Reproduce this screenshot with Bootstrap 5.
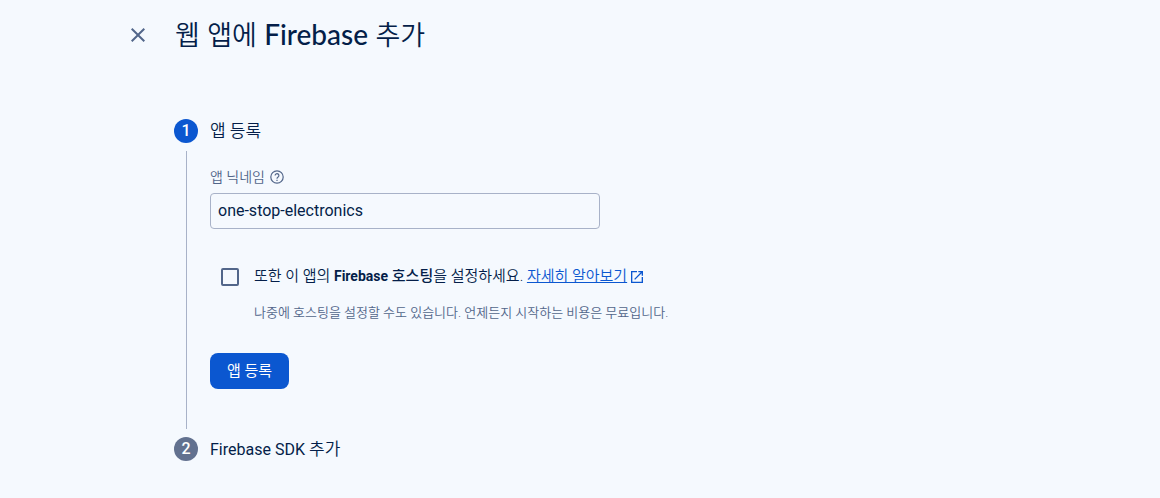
<!DOCTYPE html>
<html lang="ko">
<head>
<meta charset="utf-8">
<meta name="viewport" content="width=device-width, initial-scale=1">
<title>웹 앱에 Firebase 추가</title>
<link href="https://cdn.jsdelivr.net/npm/bootstrap@5.3.0/dist/css/bootstrap.min.css" rel="stylesheet">
<style>
body{background:#f5f9fe;color:#041e49;font-family:Roboto,"Noto Sans CJK KR",sans-serif;font-size:15px;line-height:20px;font-weight:350}
.page-head{padding:14px 24px 0 126px;gap:25px}
.close-btn{width:24px;height:24px;color:#52668a}
.page-title{font-family:Lato,"Noto Sans CJK KR",sans-serif;font-size:27px;line-height:40px;font-weight:350}
.page-title span{font-size:28px;font-weight:500}
.steps{padding:64px 24px 24px 174px}
.step-head{height:24px;gap:12px}
.step-num{width:24px;height:24px;background:#0b57d0;font-size:16px;font-weight:500}
.step-num.pending{background:#62718f}
.step-title{font-size:17px;line-height:24px;font-weight:350}
.step-title span{font-size:16px;font-weight:400}
.rail{border-left:1px solid #a8b2c8;margin:8px 0 8px 12px;padding:16px 0 40px 23px}
.field-label{font-size:14px;color:#52668a;gap:5px;margin-bottom:6px}
.nick{width:390px;max-width:100%;height:36px;padding:0 7px 2px;background:transparent;border:1px solid #a8b2c8;border-radius:4px;font-size:16px;color:#041e49}
.hosting{margin:37px 0 30px 11px;gap:15px}
.tick{appearance:none;width:18px;height:18px;border:2px solid #52668a;border-radius:2px;margin-top:2px}
.tick:checked{background:#0b57d0;border-color:#0b57d0}
.hosting strong{font-weight:500}
.hosting strong span{font-size:14px;font-weight:700}
.hosting a{color:#0b57d0;text-decoration-skip-ink:none}
.hint{font-size:13px;color:#52668a;margin-top:17px}
.register{height:36px;padding:0 17px;background:#0b57d0;border-radius:8px;font-size:15px;line-height:20px;font-weight:400}
</style>
</head>
<body>
<header class="page-head d-flex align-items-center">
  <button type="button" class="close-btn btn p-0 border-0 d-flex" aria-label="닫기">
    <svg width="24" height="24" viewBox="0 0 24 24" fill="currentColor" aria-hidden="true"><path d="M19 6.41 17.59 5 12 10.59 6.41 5 5 6.41 10.59 12 5 17.59 6.41 19 12 13.41 17.59 19 19 17.59 13.41 12z"/></svg>
  </button>
  <h1 class="page-title m-0">웹 앱에 <span>Firebase</span> 추가</h1>
</header>
<main class="steps">
  <section>
    <div class="step-head d-flex align-items-center">
      <span class="step-num rounded-circle text-white d-flex align-items-center justify-content-center">1</span>
      <h2 class="step-title m-0">앱 등록</h2>
    </div>
    <form class="rail">
      <div class="field-label d-flex align-items-center">
        <label for="nickname">앱 닉네임</label>
        <svg width="14" height="14" viewBox="0 0 14 14" fill="none" stroke="currentColor" stroke-width="1.2" aria-hidden="true"><circle cx="7" cy="7" r="6.2"/><path d="M5.1 5.6a1.9 1.9 0 1 1 3 1.5C7.4 7.6 7 7.9 7 8.8M7 9.8v1.3"/></svg>
      </div>
      <input type="text" class="nick d-block" id="nickname" value="one-stop-electronics">
      <div class="hosting d-flex align-items-start">
        <input type="checkbox" class="tick flex-shrink-0" id="hosting">
        <div>
          <div><label for="hosting">또한 이 앱의 <strong><span>Firebase</span> 호스팅</strong>을 설정하세요.</label> <a href="#">자세히 알아보기</a><svg class="ms-1 align-middle" width="12" height="12" viewBox="3 3 18 18" fill="#0b57d0" aria-hidden="true"><path d="M19 19H5V5h7V3H3v18h18v-9h-2zM14 3v2h3.59l-9.83 9.83 1.41 1.41L19 6.41V10h2V3z"/></svg></div>
          <p class="hint mb-0">나중에 호스팅을 설정할 수도 있습니다. 언제든지 시작하는 비용은 무료입니다.</p>
        </div>
      </div>
      <button type="button" class="register btn btn-primary border-0">앱 등록</button>
    </form>
  </section>
  <section class="step-head d-flex align-items-center">
    <span class="step-num pending rounded-circle text-white d-flex align-items-center justify-content-center">2</span>
    <h2 class="step-title m-0"><span>Firebase SDK</span> 추가</h2>
  </section>
</main>
<script src="https://cdn.jsdelivr.net/npm/bootstrap@5.3.0/dist/js/bootstrap.bundle.min.js"></script>
</body>
</html>
